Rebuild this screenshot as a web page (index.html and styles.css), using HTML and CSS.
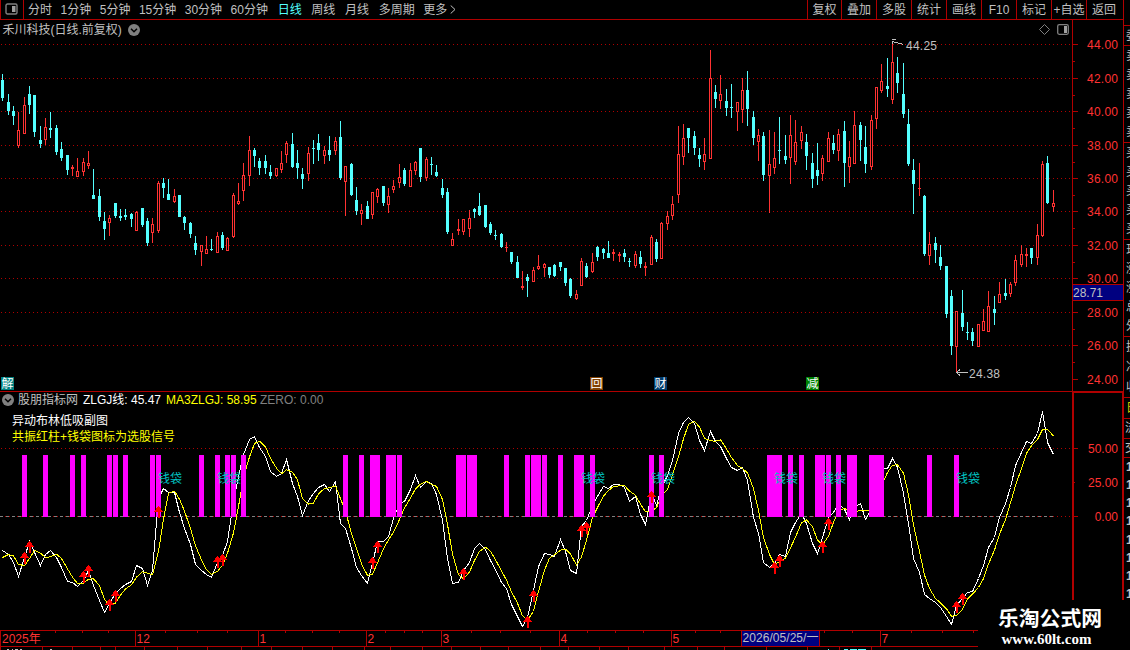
FILE: index.html
```html
<!DOCTYPE html>
<html lang="zh-CN">
<head>
<meta charset="utf-8">
<title>禾川科技 日线</title>
<link rel="stylesheet" href="styles.css">
</head>
<body>
<div class="app">
  <div class="main">
    <header class="toolbar">
      <div class="layout-btn">
        <svg width="13" height="12" viewBox="0 0 13 12"><rect x="1" y="1" width="11" height="10" rx="1.5" fill="none" stroke="#808080" stroke-width="1.4"/><rect x="7" y="3" width="3.5" height="6" fill="#a0a0a0"/></svg>
      </div>
      <nav class="periods">
        <span>分时</span><span>1分钟</span><span>5分钟</span><span>15分钟</span><span>30分钟</span><span>60分钟</span><span class="wide active">日线</span><span class="wide">周线</span><span class="wide">月线</span><span class="wide">多周期</span><span>更多</span>
        <svg class="more" width="6" height="9" viewBox="0 0 6 9"><path d="M.7 .5L5 4.5L.7 8.5" fill="none" stroke="#c0c0c0"/></svg>
      </nav>
      <div class="tools">
        <span class="first">复权</span><span>叠加</span><span>多股</span><span>统计</span><span>画线</span><span>F10</span><span>标记</span><span>+自选</span><span class="last">返回</span>
      </div>
    </header>

    <section class="pane price-pane">
      <div class="plot">
        <svg id="price" class="canvas" width="1072" height="371" viewBox="0 20 1072 371"></svg>
        <div class="title">禾川科技(日线.前复权)
          <svg width="12" height="12" viewBox="0 0 12 12"><circle cx="6" cy="6" r="6" fill="#808080"/><path d="M3 4.7L6 7.7L9 4.7" fill="none" stroke="#000" stroke-width="1.5"/></svg>
        </div>
        <span class="badge badge-jie">解</span>
        <span class="badge badge-hui">回</span>
        <span class="badge badge-cai">财</span>
        <span class="badge badge-jian">减</span>
      </div>
      <svg id="priceAxis" class="canvas" width="51" height="371" viewBox="1072 20 51 371"></svg>
    </section>

    <section class="pane osc-pane">
      <div class="plot">
        <svg id="osc" class="canvas" width="1072" height="239" viewBox="0 391 1072 239"></svg>
        <div class="legend">
          <svg width="12" height="12" viewBox="0 0 12 12"><circle cx="6" cy="6" r="6" fill="#808080"/><path d="M3 4.7L6 7.7L9 4.7" fill="none" stroke="#000" stroke-width="1.5"/></svg>
          <span class="name">股朋指标网</span><span class="v1">ZLGJ线: 45.47</span><span class="v2">MA3ZLGJ: 58.95</span><span class="v3">ZERO: 0.00</span>
        </div>
        <div class="notes"><p>异动布林低吸副图</p><p class="hint">共振红柱+钱袋图标为选股信号</p></div>
      </div>
      <svg id="oscAxis" class="canvas" width="51" height="239" viewBox="1072 391 51 239"></svg>
    </section>

    <svg id="dates" class="canvas" width="1123" height="20" viewBox="0 630 1123 20"></svg>
  </div>

  <aside class="quote">
    <div class="q q-top"></div>
    <div class="q q-wei"><i>委</i></div>
    <div class="q q-five"><i>卖</i><i>卖</i><i>卖</i><i>卖</i><i>卖</i></div>
    <div class="q q-five"><i>买</i><i>买</i><i>买</i><i>买</i><i>买</i></div>
    <div class="q q-five"><i>现</i><i>涨</i><i>涨</i><i>总</i><i>外</i></div>
    <div class="q q-three"><i>换</i><i>净</i><i>收</i></div>
    <div class="q q-tab"><i>日</i></div>
    <div class="q q-flow"><i>流</i></div>
    <div class="q q-flow"><i>交</i></div>
    <div class="q q-ticks"><b>14</b><b>14</b><b>14</b><b>14</b><b>14</b><b>14</b><b>14</b><b>14</b></div>
  </aside>

  <div class="brand"><strong>乐淘公式网</strong><span>www.60lt.com</span></div>
</div>
<script src="chart.js"></script>
</body>
</html>
```
FILE: styles.css
```css
* { box-sizing: border-box; }
body {
  margin: 0;
  background: #000;
  color: #c0c0c0;
  font-family: "Liberation Sans", "Noto Sans CJK SC", sans-serif;
  font-size: 12px;
  line-height: 14px;
}
.app {
  position: relative;
  display: flex;
  width: 1130px;
  height: 650px;
  overflow: hidden;
  background: #000;
}
.main { width: 1123px; display: flex; flex-direction: column; }
.canvas { display: block; flex: none; }
.canvas text { font-size: 12px; }

.toolbar {
  display: flex;
  height: 20px;
  border-bottom: 1px solid #b00000;
  border-left: 1px solid #b00000;
  white-space: nowrap;
}
.layout-btn { width: 23px; padding: 3px 0 0 4px; border-right: 1px solid #b00000; }
.layout-btn svg { display: block; }
.periods { display: flex; flex: 1; gap: 8.5px; padding: 3px 0 0 4px; }
.periods .wide { margin-left: 1.2px; }
.periods .active { color: #54ffff; }
.periods .more { margin: 2px 0 0 -5.5px; }
.tools { display: flex; }
.tools span { width: 35px; padding: 3px 0 0 0; border-left: 1px solid #b00000; text-align: center; }
.tools .first { width: 34px; }
.tools .last { width: 37px; padding-right: 2px; }

.pane { display: flex; }
.plot { position: relative; width: 1072px; }
.title {
  position: absolute;
  left: 2.5px;
  top: 3px;
  display: flex;
  align-items: center;
  gap: 6px;
}
.badge {
  position: absolute;
  top: 357px;
  width: 13px;
  height: 13px;
  line-height: 14px;
  font-size: 12px;
  text-align: center;
  color: #fff;
}
.badge-jie { left: 1px; background: #008080; }
.badge-hui { left: 590px; background: #804000; }
.badge-cai { left: 654px; background: #003c6c; }
.badge-jian { left: 806px; background: #008000; }

.legend {
  position: absolute;
  left: 2px;
  top: 2px;
  display: flex;
  align-items: center;
  white-space: nowrap;
}
.legend .name { width: 65px; margin-left: 4px; }
.legend .v1 { width: 83px; color: #fff; }
.legend .v2 { width: 94px; color: #ff0; }
.legend .v3 { color: #808080; }
.notes { position: absolute; left: 12px; top: 23px; color: #fff; }
.notes p { margin: 0; line-height: 15.5px; }
.notes .hint { color: #ff0; }

.quote { width: 7px; overflow: hidden; }
.q {
  display: flex;
  flex-direction: column;
  justify-content: space-around;
  width: 30px;
  padding-left: 2px;
  border-top: 1px solid #b00000;
  border-left: 1px solid #b00000;
}
.q i, .q b { display: block; font-style: normal; }
.q-top { height: 25px; border-top: 0; }
.q-wei { height: 20px; }
.q-five { height: 97px; }
.q-three { height: 61px; }
.q-tab { height: 21px; color: #d0d000; }
.q-flow { height: 19.5px; padding-left: 1px; }
.q-ticks { height: 146px; }

.brand {
  position: absolute;
  left: 978px;
  top: 600px;
  width: 152px;
  height: 50px;
  padding: 7px 0 0 20px;
  background: #000;
  color: #fff;
}
.brand strong { display: block; font-size: 20.8px; line-height: 24px; }
.brand span {
  display: block;
  padding-left: 3.5px;
  font: bold 15px/16px "Liberation Serif", serif;
}
```
FILE: chart.js
```js
// Daily candles: x, high, body top, body bottom, low, 1 = rising
const candles = [
[2,74,80,98,101,0],[8,94,102,111,115,0],[13,106,111,116,125,0],[18,112,130,146,148,1],[24,97,105,134,134,1],[29,86,94,105,114,0],
[34,95,95,132,137,0],[40,126,140,144,148,0],[45,118,127,140,145,1],[50,112,128,130,138,0],[56,125,128,152,155,0],[61,142,149,158,161,0],
[67,155,155,170,175,0],[72,165,167,169,176,1],[77,158,171,177,177,1],[83,158,162,172,176,1],[88,151,163,166,169,1],[93,169,195,199,199,0],
[99,189,196,217,221,0],[104,212,221,229,240,0],[109,215,218,223,236,1],[115,203,203,216,218,0],[120,209,216,218,221,0],[125,209,215,217,220,0],
[131,213,214,219,227,0],[136,211,212,231,231,1],[142,208,208,225,227,0],[147,218,221,243,246,0],[152,218,224,233,243,1],[158,181,183,231,233,1],
[163,178,183,188,198,0],[168,179,194,200,200,0],[174,189,196,202,203,1],[179,195,195,217,217,0],[184,216,217,223,230,0],[190,222,223,234,238,0],
[195,236,243,250,255,0],[201,245,245,252,266,1],[206,236,249,254,254,1],[211,239,249,250,251,0],[217,232,236,253,253,1],[222,232,235,248,250,0],
[227,237,238,251,251,1],[233,193,195,237,238,1],[238,183,201,204,205,1],[243,163,175,191,201,1],[249,136,150,176,186,1],[254,148,150,156,167,0],
[259,158,161,168,175,0],[265,155,161,168,174,0],[270,165,172,176,179,0],[276,168,168,176,177,1],[281,151,163,170,173,1],[286,141,143,155,163,1],
[292,133,144,167,168,0],[297,150,163,168,179,0],[302,168,174,179,189,0],[308,147,153,174,181,1],[313,140,148,149,164,0],[318,134,143,150,161,0],
[324,146,150,156,164,1],[329,136,150,155,161,0],[335,137,141,151,155,1],[340,121,137,178,180,0],[345,166,166,182,216,1],[351,163,164,195,196,0],
[356,187,200,211,215,0],[361,204,210,214,225,1],[367,201,206,219,219,0],[372,192,192,215,219,1],[377,188,189,197,203,1],[383,186,186,203,206,0],
[388,188,196,205,213,1],[393,180,186,190,193,1],[399,164,177,183,188,1],[404,168,170,184,186,0],[410,163,170,187,187,1],[415,161,162,171,175,1],
[420,148,148,177,182,0],[426,157,159,178,181,1],[431,157,164,165,175,0],[436,165,172,176,177,0],[442,179,188,195,198,0],[447,188,192,232,234,0],
[452,233,239,246,246,1],[458,219,229,231,235,1],[463,219,219,232,235,1],[469,210,218,229,237,1],[474,208,209,212,218,0],[479,193,206,215,216,0],
[485,205,205,227,228,0],[490,222,224,233,235,0],[495,230,235,236,240,0],[501,233,234,247,248,0],[506,242,247,248,252,1],[511,252,252,262,264,0],
[517,256,262,278,278,0],[522,271,286,288,290,1],[527,274,277,281,297,0],[533,267,270,282,282,1],[538,255,266,269,270,1],[544,263,264,268,277,1],
[549,267,267,275,278,0],[554,264,265,276,277,0],[560,262,262,267,271,0],[565,268,268,283,286,0],[570,278,279,296,298,0],[576,290,294,299,300,1],
[581,258,261,286,286,1],[586,263,266,277,278,0],[592,253,262,272,273,1],[597,246,247,257,261,0],[603,248,249,253,259,0],[608,241,253,258,258,0],
[613,249,252,254,261,1],[619,252,254,256,262,1],[624,249,253,257,262,0],[629,258,261,262,267,0],[635,251,254,266,268,1],[640,251,257,264,268,0],
[645,262,266,268,276,1],[651,235,237,265,265,1],[656,239,242,259,262,0],[661,222,223,259,259,1],[667,211,216,224,230,1],[672,196,204,216,220,1],
[678,126,154,195,203,1],[683,124,138,157,165,1],[688,128,128,138,153,0],[694,131,136,148,155,0],[699,148,155,159,167,0],[704,138,154,162,170,1],
[710,50,78,159,159,1],[715,85,92,99,108,0],[720,75,94,101,109,1],[726,89,101,108,116,0],[731,84,107,108,118,0],[737,102,102,112,131,1],
[742,78,90,110,123,1],[747,71,90,109,126,0],[753,111,117,138,145,0],[758,129,135,142,161,1],[763,132,136,175,181,0],[769,130,164,176,213,1],
[774,132,158,168,174,1],[779,117,150,151,164,0],[785,135,156,160,164,0],[790,115,135,158,184,1],[795,120,142,162,165,1],[801,126,132,141,149,1],
[806,134,142,156,170,0],[812,153,163,179,188,0],[817,143,170,176,185,0],[822,155,158,174,181,1],[828,132,138,162,162,1],[833,135,143,150,154,0],
[838,129,134,151,161,1],[844,121,131,163,187,0],[849,141,157,167,183,1],[854,111,125,164,164,1],[860,122,125,140,161,0],[865,126,147,164,173,0],
[871,115,120,167,170,1],[876,87,87,119,129,1],[881,64,81,91,93,1],[887,58,86,89,97,0],[892,43,62,100,104,1],[897,57,73,83,93,0],
[903,63,94,114,118,0],[908,109,124,164,166,0],[913,159,170,184,214,0],[919,163,188,189,196,1],[924,195,196,254,256,0],[929,232,244,256,265,1],
[935,237,243,250,263,0],[940,245,257,266,270,0],[946,266,266,314,318,0],[951,290,296,346,355,0],[956,311,311,347,372,1],[962,290,313,327,331,0],
[967,322,332,333,340,0],[972,328,332,341,346,0],[978,324,324,347,347,1],[983,309,321,331,331,1],[988,291,306,332,332,1],[994,296,309,313,325,0],
[999,282,294,303,303,1],[1005,279,293,296,300,0],[1010,282,284,294,297,1],[1015,255,260,283,286,1],[1021,245,254,265,267,1],[1026,248,254,256,267,1],
[1031,248,248,258,264,0],[1037,224,235,258,265,1],[1042,161,164,236,237,1],[1047,156,163,203,204,0],[1053,190,203,207,212,1]
];

// Oscillator level for each candle
const osc = [
550,554,562,576,557,541,552,565,554,550,557,567,581,582,586,580,570,585,600,612,603,593,588,584,581,565,568,585,570,498,
488,492,492,512,528,544,564,570,574,577,562,555,541,501,476,454,439,436,447,456,471,476,473,459,483,496,515,500,493,487,
484,491,481,523,528,548,567,575,583,563,541,541,536,518,503,501,489,475,487,481,483,494,520,558,583,582,570,562,548,543,
549,560,569,582,588,604,616,626,617,590,566,553,554,556,539,551,570,573,526,520,505,496,486,488,484,484,487,501,496,514,
524,493,505,487,475,460,433,422,417,423,440,450,431,441,446,458,467,470,467,480,517,533,562,567,563,554,556,532,522,513,
523,543,553,537,517,512,503,509,519,507,503,519,508,480,468,468,458,467,493,523,558,572,594,598,602,607,616,624,605,598,
592,591,578,565,547,537,517,503,487,465,452,441,443,433,411,442,454
];

const bars = [24,45,72,83,109,115,125,152,158,201,217,227,233,243,345,361,372,377,388,393,399,458,463,469,474,506,527,533,538,544,
560,576,581,592,651,661,769,774,779,790,801,817,822,828,838,849,854,871,876,881,929,956];
const arrows = [[24,552],[29,541],[83,571],[88,565],[109,599],[115,590],[158,506],[217,556],[222,554],[372,557],[377,541],[463,568],
[527,616],[533,590],[581,525],[586,522],[651,491],[774,562],[779,555],[822,541],[828,518],[956,601],[962,593]];
const bags = [158,217,581,651,774,822,956];

const RED = '#ff3232', CYAN = '#54ffff', LINE = '#b00000';
const rect = (x, y, w, h, fill) => `<rect x="${x}" y="${y}" width="${w}" height="${h}" fill="${fill}"/>`;
const text = (x, y, s, fill, extra = '') => `<text x="${x}" y="${y}" fill="${fill}" ${extra}>${s}</text>`;
const dots = y => `<path d="M1 ${y + .5}H1072" stroke="${LINE}" stroke-dasharray="1 3" shape-rendering="crispEdges"/>`;
const put = (id, s) => { document.getElementById(id).innerHTML = s; };

// Price chart
const majors = [44,78,111,145,178,211,245,278,312,345,379];
let s = majors.slice(0, -1).map(dots).join('');
for (const [x, h, t, b, l, up] of candles) {
  const c = up ? RED : CYAN;
  s += rect(x, h, 1, l - h, c) + rect(x - 1, t, 3, b - t, c);
  if (up && b - t > 2) s += rect(x, t + 1, 1, b - t - 2, '#000');
}
s += '<g fill="none" stroke="#c0c0c0" shape-rendering="crispEdges"><path d="M903.5 44.5L892.5 41.5M892.5 44V40.5M892 39.5H896"/>' +
  '<path d="M968 372.5H957M960 369.5L956.5 372.5L960 375.5"/></g>' +
  text(906, 50, '44.25', '#c0c0c0', 'textLength="31"') + text(969, 378, '24.38', '#c0c0c0', 'textLength="31"') +
  '<path d="M1044.5 24.5L1049.5 29.5L1044.5 34.5L1039.5 29.5Z" fill="none" stroke="#808080"/>' +
  '<rect x="1057.7" y="24.7" width="10.6" height="9.6" rx="1.5" fill="none" stroke="#808080" stroke-width="1.3"/>' + rect(1064, 26, 3, 7, '#a0a0a0');
put('price', s);

// Price scale
s = rect(1072, 20, 1, 371, LINE);
majors.forEach((y, i) => { s += rect(1072, y, 6, 1, LINE) + text(1087, y + 5, (44 - 2 * i) + '.00', RED, 'textLength="31"'); });
[61,95,128,162,195,228,262,329,362].forEach(y => { s += rect(1072, y, 3, 1, LINE); });
s += rect(1072, 284, 51, 17, LINE) + rect(1073, 285, 50, 15, '#000080') + text(1073, 297, '28.71', '#c0c0c0');
put('priceAxis', s);

// Oscillator: level line, its 3-day average, signal bars, arrows, labels
const xs = candles.map(c => c[0]);
const avg = osc.map((v, i) => i < 2 ? [557, 554][i] : (v + osc[i - 1] + osc[i - 2]) / 3);
const poly = (vals, c) => `<polyline fill="none" stroke="${c}" shape-rendering="crispEdges" points="${vals.map((v, i) => (xs[i] + .5) + ',' + (v + .5)).join(' ')}"/>`;
s = rect(0, 391, 1072, 1, LINE) + dots(448) + dots(516) +
  '<path d="M0 516.5H1053" stroke="#808080" stroke-dasharray="3 3" shape-rendering="crispEdges"/>' + poly(osc, '#fff') + poly(avg, '#ff0');
bars.forEach(x => { s += rect(x - 2, 455, 5, 62, '#f0f'); });
bags.forEach(x => { s += text(x, 483, '钱袋', '#00c0c0'); });
arrows.forEach(([x, y]) => { s += `<path d="M${x + .5} ${y}l5 6h-4v6h-2v-6h-4z" fill="#f00" shape-rendering="crispEdges"/>`; });
put('osc', s);

s = rect(1072, 391, 51, 2, LINE) + rect(1072, 391, 2, 209, LINE) + rect(1122, 391, 1, 209, LINE);
[[448, '50.00'], [482, '25.00'], [516, '0.00']].forEach(([y, t]) => {
  s += rect(1072, y, y === 482 ? 3 : 6, 1, LINE) + text(1118, y + 5, t, RED, 'text-anchor="end"');
});
put('oscAxis', s);

// Date scale
s = rect(0, 630, 978, 1, LINE) + rect(0, 646, 978, 1, LINE) + rect(0, 630, 1, 17, LINE) + text(2, 643, '2025年', RED);
[[135, 12], [258, 1], [366, 2], [441, 3], [559, 4], [671, 5], [880, 7]].forEach(([x, m]) => {
  s += rect(x, 630, 1, 17, LINE) + text(x + 1.5, 643, m, RED);
});
[55,82,108,165,197,227,285,312,339,385,404,422,471,500,530,587,615,643,695,720,824,852,911,942,973].forEach(x => { s += rect(x, 631, 1, 2, LINE); });
[0,42,72,100,115,144,177,207,241,271,302,332,364,390,422,451,480,508,540,568,599,628,664,697,724,766,807,839,871].forEach(x => { s += rect(x, 647, 1, 3, LINE); });
s += rect(741, 630, 79, 17, LINE) + rect(742, 631, 77, 15, '#000080') + text(742.5, 642, '2026/05/25/一', '#c0c0c0', 'textLength="76"');
[[7,2],[12,1],[15,3],[20,2],[50,2]].forEach(([x, w]) => { s += rect(x, 649, w, 1, '#c0c0c0'); });
[[828,1],[844,4],[850,7],[858,8]].forEach(([x, w]) => { s += rect(x, 649, w, 1, CYAN); });
put('dates', s);
```
